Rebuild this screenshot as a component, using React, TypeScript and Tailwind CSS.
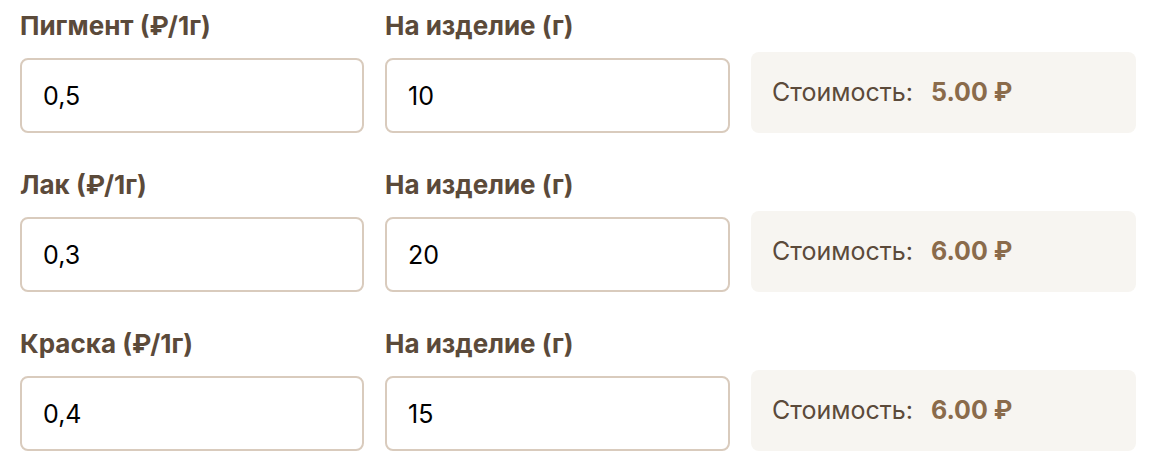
import React from 'react';

interface Row {
  label: string;
  price: string;
  amount: string;
  cost: string;
}

const rows: Row[] = [
  { label: 'Пигмент (₽/1г)', price: '0,5', amount: '10', cost: '5.00 ₽' },
  { label: 'Лак (₽/1г)', price: '0,3', amount: '20', cost: '6.00 ₽' },
  { label: 'Краска (₽/1г)', price: '0,4', amount: '15', cost: '6.00 ₽' },
];

const Field: React.FC<{ label: string; value: string }> = ({ label, value }) => (
  <div className="flex flex-col">
    <label className="text-[26px] leading-[32px] font-bold text-[#5b4a3a] mb-[16px]">{label}</label>
    <input
      defaultValue={value}
      className="h-[75px] w-full rounded-[8px] border-2 border-[#d9cbbd] bg-white px-[21px] text-[25px] text-black outline-none"
    />
  </div>
);

export default function App() {
  return (
    <div className="min-h-screen bg-white px-[20px] pt-[10px] font-['Inter',sans-serif]">
      <div className="flex flex-col gap-[36px]">
        {rows.map((row, i) => (
          <div key={i} className="grid grid-cols-[344px_345px_1fr] gap-x-[21px] items-end">
            <Field label={row.label} value={row.price} />
            <Field label="На изделие (г)" value={row.amount} />
            <div className="h-[81px] rounded-[8px] bg-[#f7f5f1] flex items-center px-[21px] gap-[18px]">
              <span className="text-[25px] text-[#5b4a3a]">Стоимость:</span>
              <span className="text-[25px] font-bold text-[#8a6b4b]">{row.cost}</span>
            </div>
          </div>
        ))}
      </div>
    </div>
  );
}
